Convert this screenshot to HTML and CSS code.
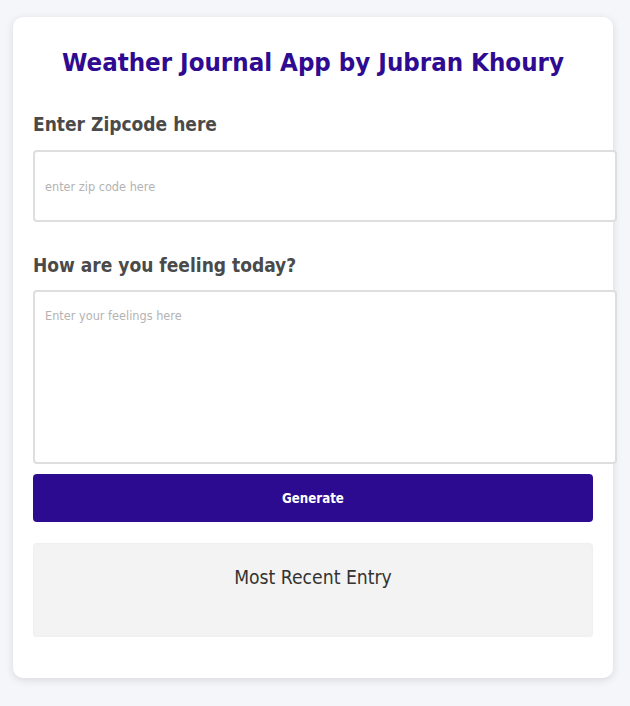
FILE: index.html
```html
<!DOCTYPE html>
<html lang="en">
<head>
<meta charset="utf-8">
<title>Weather Journal App</title>
<link rel="stylesheet" href="styles.css">
</head>
<body>
  <main class="card">
    <h1 class="title">Weather Journal App by Jubran Khoury</h1>
    <label class="label label-zip" for="zip">Enter Zipcode here</label>
    <input class="field field-zip" id="zip" type="text" placeholder="enter zip code here">
    <label class="label label-feel" for="feelings">How are you feeling today?</label>
    <textarea class="field field-feel" id="feelings" placeholder="Enter your feelings here"></textarea>
    <button class="generate" type="button">Generate</button>
    <section class="entry">
      <div class="entry-title">Most Recent Entry</div>
    </section>
  </main>
</body>
</html>
```
FILE: styles.css
```css
* { box-sizing: border-box; }
html, body { margin: 0; padding: 0; }
body {
  background: #f5f6fa;
  padding: 17px 13px;
  font-family: "DejaVu Sans Condensed", "DejaVu Sans", sans-serif;
  font-stretch: condensed;
}
.card {
  width: 600px;
  background: #fff;
  border-radius: 10px;
  box-shadow: 0 2px 8px rgba(0, 0, 0, 0.12);
  padding: 25px 20px 41px;
  display: flex;
  flex-direction: column;
  align-items: stretch;
}
.title {
  margin: 0;
  text-align: center;
  font-size: 25.6px;
  line-height: 40px;
  font-weight: 700;
  color: #2e0b91;
}
.label {
  display: block;
  margin-top: 27px;
  font-size: 19px;
  line-height: 30px;
  font-weight: 700;
  color: #4a4a4a;
}
.label-feel { margin-top: 28px; }
.field {
  box-sizing: content-box;
  width: 100%;
  margin: 11px 0 0;
  padding: 0 10px;
  border: 2px solid #dedede;
  border-radius: 4px;
  font-family: inherit;
  font-stretch: condensed;
  font-size: 12.6px;
  color: #333;
  background: #fff;
  outline: none;
}
.field::placeholder { color: #b3b3b3; }
.field-zip { height: 68px; }
.field-feel {
  margin-top: 10px;
  height: 148px;
  padding-top: 16px;
  padding-bottom: 6px;
  resize: none;
  display: block;
}
.generate {
  margin-top: 10px;
  height: 48px;
  border: none;
  border-radius: 4px;
  background: #2d0b91;
  color: #fff;
  font-family: inherit;
  font-stretch: condensed;
  font-size: 13.2px;
  font-weight: 700;
}
.entry {
  margin-top: 21px;
  height: 94px;
  background: #f3f3f3;
  border-radius: 4px;
  box-shadow: inset 0 0 3px rgba(0, 0, 0, 0.04);
  padding-top: 20px;
}
.entry-title {
  text-align: center;
  font-size: 19.2px;
  line-height: 30px;
  color: #333;
}
```
